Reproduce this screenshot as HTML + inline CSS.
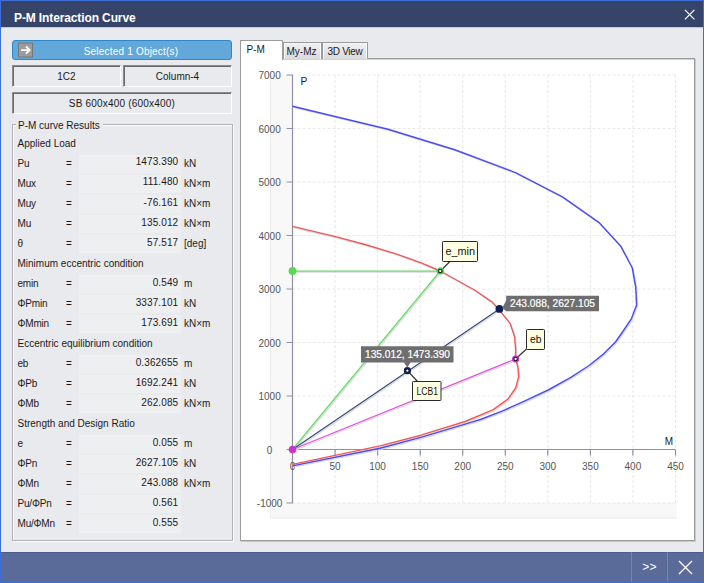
<!DOCTYPE html>
<html><head><meta charset="utf-8"><title>P-M Interaction Curve</title>
<style>
html,body{margin:0;padding:0;}
body{width:704px;height:583px;overflow:hidden;background:#e9eaed;font-family:"Liberation Sans",sans-serif;font-size:10px;color:#1a1a1a;}
#w{position:relative;width:704px;height:583px;background:#e9eaed;overflow:hidden;}
#w div{position:absolute;box-sizing:border-box;}
.t{height:18px;line-height:18px;white-space:nowrap;}
.lb{letter-spacing:-0.2px;}
.v{left:79px;width:99.3px;text-align:right;letter-spacing:0.12px;}
.vb{left:79px;width:102px;height:18px;background:#eeeff1;}
.sunk{border:1px solid;border-color:#8a8a8a #fff #fff #8a8a8a;box-shadow:inset 1px 1px 0 #6a6a6a;text-align:center;line-height:22px;background:#e9eaed;}
.tab{border:1px solid #9a9a9e;border-bottom:none;background:linear-gradient(#f1f1f2,#dadadd);text-align:center;line-height:15px;box-shadow:inset -1px 0 0 #fff, inset 1px 1px 0 #f6f6f6;}
</style></head><body>
<div id="w">
<div style="left:0;top:0;width:704px;height:583px;border:1px solid #3d6fd6;border-top-width:2px;"></div>
<div style="left:1px;top:1px;width:702px;height:26px;background:#36446a;"></div><div style="left:1px;top:27px;width:702px;height:1px;background:#c5c9d3;"></div>
<div style="left:14px;top:9.8px;height:16px;line-height:16px;font-size:12px;font-weight:bold;color:#fff;white-space:nowrap;letter-spacing:-0.12px;">P-M Interaction Curve</div>
<svg style="position:absolute;left:683px;top:9px" width="12" height="12" viewBox="0 0 12 12"><path d="M1.9,0.9 L11.4,10.4 M11.4,0.9 L1.9,10.4" stroke="#fff" stroke-width="1.25" fill="none"/></svg>

<div style="left:12px;top:40px;width:220px;height:20px;background:#62a8da;border:1px solid #2f88c6;border-radius:3px;"></div>
<svg style="position:absolute;left:16px;top:40px" width="20" height="20" viewBox="0 0 20 20"><rect x="2.5" y="3" width="14" height="14" fill="#9b9b9b" stroke="#787878" stroke-width="1"/><path d="M5,10.1 H13 M10,6.5 L13.6,10.1 L10,13.7" stroke="#fff" stroke-width="1.9" fill="none"/></svg>
<div class="t" style="left:40px;top:42.5px;width:182px;text-align:center;color:#fff;letter-spacing:0.2px;">Selected 1 Object(s)</div>

<div class="sunk" style="left:12px;top:65px;width:109px;height:22px;">1C2</div>
<div class="sunk" style="left:123px;top:65px;width:109px;height:22px;">Column-4</div>
<div class="sunk" style="left:12px;top:92px;width:220px;height:22px;letter-spacing:0.2px;">SB 600x400 (600x400)</div>

<div style="left:12px;top:124px;width:221px;height:417px;border:1px solid #b0b0b5;box-shadow:1px 1px 0 #fbfbfc, inset 1px 1px 0 #fbfbfc;"></div>
<div class="t" style="left:15.5px;top:116.9px;padding:0 3px 0 2.5px;background:#e9eaed;">P-M curve Results</div>
<div class="t" style="left:17.5px;top:134.8px">Applied Load</div>
<div class="vb" style="top:154.8px"></div>
<div class="t lb" style="left:17.5px;top:154.8px">Pu</div>
<div class="t" style="left:66px;top:154.8px">=</div>
<div class="t v" style="top:153.4px">1473.390</div>
<div class="t" style="left:184px;top:154.8px">kN</div>
<div class="vb" style="top:174.8px"></div>
<div class="t lb" style="left:17.5px;top:174.8px">Mux</div>
<div class="t" style="left:66px;top:174.8px">=</div>
<div class="t v" style="top:173.4px">111.480</div>
<div class="t" style="left:184px;top:174.8px">kN×m</div>
<div class="vb" style="top:194.9px"></div>
<div class="t lb" style="left:17.5px;top:194.9px">Muy</div>
<div class="t" style="left:66px;top:194.9px">=</div>
<div class="t v" style="top:193.5px">-76.161</div>
<div class="t" style="left:184px;top:194.9px">kN×m</div>
<div class="vb" style="top:214.9px"></div>
<div class="t lb" style="left:17.5px;top:214.9px">Mu</div>
<div class="t" style="left:66px;top:214.9px">=</div>
<div class="t v" style="top:213.5px">135.012</div>
<div class="t" style="left:184px;top:214.9px">kN×m</div>
<div class="vb" style="top:234.9px"></div>
<div class="t lb" style="left:17.5px;top:234.9px">θ</div>
<div class="t" style="left:66px;top:234.9px">=</div>
<div class="t v" style="top:233.5px">57.517</div>
<div class="t" style="left:184px;top:234.9px">[deg]</div>
<div class="t" style="left:17.5px;top:254.9px">Minimum eccentric condition</div>
<div class="vb" style="top:274.9px"></div>
<div class="t lb" style="left:17.5px;top:274.9px">emin</div>
<div class="t" style="left:66px;top:274.9px">=</div>
<div class="t v" style="top:273.5px">0.549</div>
<div class="t" style="left:184px;top:274.9px">m</div>
<div class="vb" style="top:295.0px"></div>
<div class="t lb" style="left:17.5px;top:295.0px">ΦPmin</div>
<div class="t" style="left:66px;top:295.0px">=</div>
<div class="t v" style="top:293.6px">3337.101</div>
<div class="t" style="left:184px;top:295.0px">kN</div>
<div class="vb" style="top:315.0px"></div>
<div class="t lb" style="left:17.5px;top:315.0px">ΦMmin</div>
<div class="t" style="left:66px;top:315.0px">=</div>
<div class="t v" style="top:313.6px">173.691</div>
<div class="t" style="left:184px;top:315.0px">kN×m</div>
<div class="t" style="left:17.5px;top:335.0px">Eccentric equilibrium condition</div>
<div class="vb" style="top:355.0px"></div>
<div class="t lb" style="left:17.5px;top:355.0px">eb</div>
<div class="t" style="left:66px;top:355.0px">=</div>
<div class="t v" style="top:353.6px">0.362655</div>
<div class="t" style="left:184px;top:355.0px">m</div>
<div class="vb" style="top:375.0px"></div>
<div class="t lb" style="left:17.5px;top:375.0px">ΦPb</div>
<div class="t" style="left:66px;top:375.0px">=</div>
<div class="t v" style="top:373.6px">1692.241</div>
<div class="t" style="left:184px;top:375.0px">kN</div>
<div class="vb" style="top:395.1px"></div>
<div class="t lb" style="left:17.5px;top:395.1px">ΦMb</div>
<div class="t" style="left:66px;top:395.1px">=</div>
<div class="t v" style="top:393.7px">262.085</div>
<div class="t" style="left:184px;top:395.1px">kN×m</div>
<div class="t" style="left:17.5px;top:415.1px">Strength and Design Ratio</div>
<div class="vb" style="top:435.1px"></div>
<div class="t lb" style="left:17.5px;top:435.1px">e</div>
<div class="t" style="left:66px;top:435.1px">=</div>
<div class="t v" style="top:433.7px">0.055</div>
<div class="t" style="left:184px;top:435.1px">m</div>
<div class="vb" style="top:455.1px"></div>
<div class="t lb" style="left:17.5px;top:455.1px">ΦPn</div>
<div class="t" style="left:66px;top:455.1px">=</div>
<div class="t v" style="top:453.7px">2627.105</div>
<div class="t" style="left:184px;top:455.1px">kN</div>
<div class="vb" style="top:475.1px"></div>
<div class="t lb" style="left:17.5px;top:475.1px">ΦMn</div>
<div class="t" style="left:66px;top:475.1px">=</div>
<div class="t v" style="top:473.7px">243.088</div>
<div class="t" style="left:184px;top:475.1px">kN×m</div>
<div class="vb" style="top:495.2px"></div>
<div class="t lb" style="left:17.5px;top:495.2px">Pu/ΦPn</div>
<div class="t" style="left:66px;top:495.2px">=</div>
<div class="t v" style="top:493.8px">0.561</div>
<div class="vb" style="top:515.2px"></div>
<div class="t lb" style="left:17.5px;top:515.2px">Mu/ΦMn</div>
<div class="t" style="left:66px;top:515.2px">=</div>
<div class="t v" style="top:513.8px">0.555</div>

<div style="left:240px;top:58px;width:455px;height:483px;background:#fff;border:1px solid #9c9c9c;box-shadow:1px 1px 0 #c8c8c8, inset 0 1px 0 #d4d4d7;"></div>
<div style="left:240px;top:40px;width:43px;height:20px;background:#fff;border:1px solid #9c9c9c;border-bottom:none;"></div>
<div class="t" style="left:246.5px;top:41px;">P-M</div>
<div class="tab" style="left:283px;top:42px;width:39px;height:17px;"></div><div class="t" style="left:283px;top:42.8px;width:37px;text-align:center">My-Mz</div>
<div class="tab" style="left:322px;top:42px;width:46px;height:17px;"></div><div class="t" style="left:322px;top:42.8px;width:46px;text-align:center;letter-spacing:-0.3px">3D View</div>

<div style="left:1px;top:552px;width:702px;height:30px;background:#5a6b9a;border-top:1px solid #4f5f90;"></div>
<div style="left:631px;top:552px;width:1px;height:30px;background:#7785ad;"></div>
<div style="left:667px;top:552px;width:1px;height:30px;background:#7785ad;"></div>
<div class="t" style="left:632px;top:558px;width:35px;text-align:center;color:#fff;font-size:12px;letter-spacing:0.3px;">&gt;&gt;</div>
<svg style="position:absolute;left:678px;top:560px" width="15" height="15" viewBox="0 0 15 15"><path d="M1,1 L14,14 M14,1 L1,14" stroke="#fff" stroke-width="1.3" fill="none"/></svg>
<svg width="704" height="583" viewBox="0 0 704 583" style="position:absolute;left:0;top:0" font-family="Liberation Sans, sans-serif">
<path d="M270,75 H292.5 V503 H677 V518.5 H270 Z" fill="#f8f8f9"/>
<path d="M270.5,75 V518 H677" fill="none" stroke="#ececee" stroke-width="1"/>
<path d="M335.1,75 V503 M377.6,75 V503 M420.2,75 V503 M462.7,75 V503 M505.3,75 V503 M547.8,75 V503 M590.4,75 V503 M632.9,75 V503 M675.5,75 V503 M292.5,503.0 H675.5 M292.5,396.0 H675.5 M292.5,342.5 H675.5 M292.5,289.0 H675.5 M292.5,235.5 H675.5 M292.5,182.0 H675.5 M292.5,128.5 H675.5 M292.5,75.0 H675.5" fill="none" stroke="#e8e8e8" stroke-width="1" stroke-dasharray="3 2"/>
<path d="M292.5,74.5 V503.5 M292.5,449.5 H675.5 M286.5,503.0 H292.5 M286.5,449.5 H292.5 M286.5,396.0 H292.5 M286.5,342.5 H292.5 M286.5,289.0 H292.5 M286.5,235.5 H292.5 M286.5,182.0 H292.5 M286.5,128.5 H292.5 M286.5,75.0 H292.5 M292.5,449.5 V455.5 M335.1,449.5 V455.5 M377.6,449.5 V455.5 M420.2,449.5 V455.5 M462.7,449.5 V455.5 M505.3,449.5 V455.5 M547.8,449.5 V455.5 M590.4,449.5 V455.5 M632.9,449.5 V455.5 M675.5,449.5 V455.5" fill="none" stroke="#9090a4" stroke-width="1.2"/>
<g font-size="10" fill="#555">
<text x="269.6" y="507.3" text-anchor="middle">-1000</text>
<text x="269.6" y="453.8" text-anchor="middle">0</text>
<text x="269.6" y="400.3" text-anchor="middle">1000</text>
<text x="269.6" y="346.8" text-anchor="middle">2000</text>
<text x="269.6" y="293.3" text-anchor="middle">3000</text>
<text x="269.6" y="239.8" text-anchor="middle">4000</text>
<text x="269.6" y="186.3" text-anchor="middle">5000</text>
<text x="269.6" y="132.8" text-anchor="middle">6000</text>
<text x="269.6" y="79.3" text-anchor="middle">7000</text>
<text x="292.5" y="470.1" text-anchor="middle">0</text>
<text x="335.1" y="470.1" text-anchor="middle">50</text>
<text x="377.6" y="470.1" text-anchor="middle">100</text>
<text x="420.2" y="470.1" text-anchor="middle">150</text>
<text x="462.7" y="470.1" text-anchor="middle">200</text>
<text x="505.3" y="470.1" text-anchor="middle">250</text>
<text x="547.8" y="470.1" text-anchor="middle">300</text>
<text x="590.4" y="470.1" text-anchor="middle">350</text>
<text x="632.9" y="470.1" text-anchor="middle">400</text>
<text x="675.5" y="470.1" text-anchor="middle">450</text>
</g>
<text x="300.6" y="85.3" font-size="10.3" fill="#222">P</text>
<text x="673" y="444.5" font-size="10" fill="#222" text-anchor="end">M</text>
<polyline points="292.5,106.2 388.0,129.2 454.8,149.7 515.5,172.6 562.4,196.8 598.8,222.3 620.6,245.9 632.3,268.0 635.7,287.0 636.6,305.0 631.5,318.6 622.9,331.5 615.5,342.0 604.0,353.6 589.1,365.5 570.9,377.3 548.2,390.0 525.5,400.7 502.7,410.9 481.1,419.2 465.2,424.1 420.9,437.4 380.0,448.3 292.5,465.9" fill="none" stroke="#d9d9d9" stroke-width="1.2" transform="translate(1,1.2)"/>
<polyline points="292.5,226.4 335.5,236.6 365.0,244.5 396.8,254.1 421.8,263.2 440.3,271.0 474.5,290.0 492.3,302.2 498.9,309.5 510.1,323.4 514.6,336.8 515.7,350.1 515.4,358.9 517.9,366.8 518.6,376.9 515.7,388.0 507.9,399.1 493.3,409.6 465.2,421.5 420.9,435.2 380.0,445.9 292.5,464.4" fill="none" stroke="#d9d9d9" stroke-width="1.2" transform="translate(1,1.2)"/>
<polyline points="292.5,106.2 388.0,129.2 454.8,149.7 515.5,172.6 562.4,196.8 598.8,222.3 620.6,245.9 632.3,268.0 635.7,287.0 636.6,305.0 631.5,318.6 622.9,331.5 615.5,342.0 604.0,353.6 589.1,365.5 570.9,377.3 548.2,390.0 525.5,400.7 502.7,410.9 481.1,419.2 465.2,424.1 420.9,437.4 380.0,448.3 292.5,465.9" fill="none" stroke="#4c4cf4" stroke-width="1.45" stroke-linejoin="round"/>
<polyline points="292.5,226.4 335.5,236.6 365.0,244.5 396.8,254.1 421.8,263.2 440.3,271.0 474.5,290.0 492.3,302.2 498.9,309.5 510.1,323.4 514.6,336.8 515.7,350.1 515.4,358.9 517.9,366.8 518.6,376.9 515.7,388.0 507.9,399.1 493.3,409.6 465.2,421.5 420.9,435.2 380.0,445.9 292.5,464.4" fill="none" stroke="#f25858" stroke-width="1.4" stroke-linejoin="round"/>
<line x1="293.5" y1="272.2" x2="441.3" y2="272.2" stroke="#d9d9d9" stroke-width="1.2"/>
<line x1="292.5" y1="271.0" x2="440.3" y2="271.0" stroke="#68dc68" stroke-width="1.25"/>
<line x1="293.5" y1="450.7" x2="441.3" y2="272.2" stroke="#d9d9d9" stroke-width="1.2"/>
<line x1="292.5" y1="449.5" x2="440.3" y2="271.0" stroke="#68dc68" stroke-width="1.25"/>
<line x1="293.5" y1="450.7" x2="500.4" y2="310.1" stroke="#d9d9d9" stroke-width="1.2"/>
<line x1="292.5" y1="449.5" x2="499.4" y2="308.9" stroke="#34497c" stroke-width="1.15"/>
<line x1="293.5" y1="450.7" x2="516.6" y2="360.2" stroke="#d9d9d9" stroke-width="1.2"/>
<line x1="292.5" y1="449.5" x2="515.6" y2="359.0" stroke="#dd55dd" stroke-width="1.3"/>
<circle cx="292.5" cy="271.0" r="3.9" fill="#58d858"/>
<circle cx="292.5" cy="449.5" r="3.75" fill="#cc33cc"/>
<circle cx="499.4" cy="308.9" r="3.9" fill="#0a1f55"/>
<line x1="440.3" y1="271.0" x2="450.0" y2="261.5" stroke="#333" stroke-width="1.2"/>
<line x1="407.4" y1="370.7" x2="417.5" y2="381.5" stroke="#333" stroke-width="1.2"/>
<line x1="515.6" y1="359.0" x2="526.5" y2="349.0" stroke="#333" stroke-width="1.2"/>
<circle cx="440.3" cy="271.0" r="3.6" fill="#44cc44"/>
<circle cx="440.3" cy="271.0" r="1.7" fill="#fff" stroke="#1a1a1a" stroke-width="1.1"/>
<circle cx="407.4" cy="370.7" r="3.6" fill="#0a1f55"/>
<circle cx="407.4" cy="370.7" r="1.7" fill="#fff" stroke="#1a1a1a" stroke-width="1.1"/>
<circle cx="515.6" cy="359.0" r="3.6" fill="#cc33cc"/>
<circle cx="515.6" cy="359.0" r="1.7" fill="#fff" stroke="#1a1a1a" stroke-width="1.1"/>
<rect x="442.5" y="241.5" width="35" height="20" fill="#ffffe1" stroke="#2a2a2a" stroke-width="1" rx="0.8"/>
<text x="445.5" y="254.8" font-size="11" fill="#111" textLength="29.5" lengthAdjust="spacingAndGlyphs">e_min</text>
<rect x="412.5" y="381.5" width="28.5" height="19" fill="#ffffe1" stroke="#2a2a2a" stroke-width="1" rx="0.8"/>
<text x="416.5" y="394.9" font-size="11" fill="#111" textLength="21.5" lengthAdjust="spacingAndGlyphs">LCB1</text>
<rect x="526.5" y="329.5" width="18" height="20" fill="#ffffe1" stroke="#2a2a2a" stroke-width="1" rx="0.8"/>
<text x="530" y="343" font-size="11" fill="#111" textLength="11.5" lengthAdjust="spacingAndGlyphs">eb</text>
<path d="M361,346.2 H453.5 V362.4 H410.5 L407.3,367.5 L404,362.4 H361 Z" fill="#6e6e6e"/>
<text x="365" y="357.7" font-size="10" fill="#fff" stroke="#fff" stroke-width="0.2" textLength="85" lengthAdjust="spacingAndGlyphs">135.012, 1473.390</text>
<path d="M506.2,295.7 H599 V311.3 H506.2 L502.3,307.8 L506.2,300.5 Z" fill="#6e6e6e"/>
<text x="510" y="307" font-size="10" fill="#fff" stroke="#fff" stroke-width="0.2" textLength="85" lengthAdjust="spacingAndGlyphs">243.088, 2627.105</text>
</svg>
</div>
</body></html>
